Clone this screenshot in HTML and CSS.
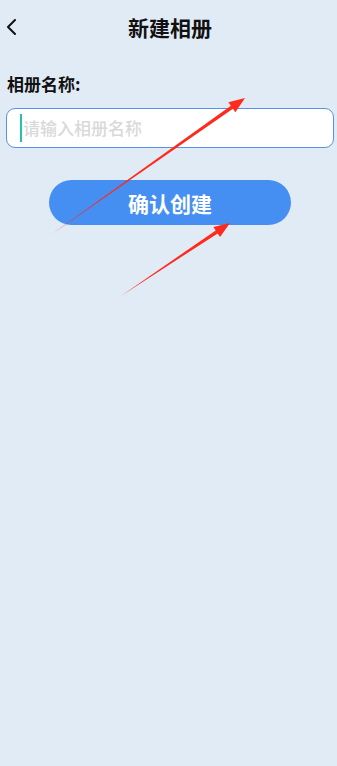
FILE: index.html
```html
<!DOCTYPE html>
<html lang="zh-CN">
<head>
<meta charset="utf-8">
<title>新建相册</title>
<link rel="stylesheet" href="styles.css">
</head>
<body>
<div class="page">
  <header class="topbar">
    <span class="back">
      <svg width="12" height="16" viewBox="0 0 12 16"><path d="M10 1 L3 8 L10 15" fill="none" stroke="#111" stroke-width="2" stroke-linecap="round" stroke-linejoin="round"/></svg>
    </span>
    <h1 class="title">新建相册</h1>
    <span class="spacer"></span>
  </header>
  <main class="form">
    <div class="label">相册名称:</div>
    <div class="field">
      <span class="caret"></span>
      <span class="placeholder">请输入相册名称</span>
    </div>
    <button class="submit">确认创建</button>
  </main>
  <svg class="annot" width="337" height="766" viewBox="0 0 337 766">
    <polygon fill="#ff2a1c" points="52,234 232.95,108.69 235.37,112.13 245,98 228.45,102.31 230.87,105.75"/>
    <polygon fill="#ff2a1c" points="121,296 217.70,233.40 220.04,236.89 230,223 213.36,226.91 215.70,230.40"/>
  </svg>
</div>
</body>
</html>
```
FILE: styles.css
```css
html, body {
  margin: 0;
  padding: 0;
  background: #e1ebf5;
}
body {
  font-family: "Noto Sans CJK SC", "Noto Sans", sans-serif;
  color: #111;
}
.page {
  position: relative;
  width: 337px;
  min-height: 766px;
}
.topbar {
  height: 54px;
  display: grid;
  grid-template-columns: 40px 1fr 40px;
  align-items: center;
}
.back {
  display: flex;
  padding-left: 5px;
}
.title {
  margin: 0;
  text-align: center;
  font-size: 21px;
  font-weight: 700;
  line-height: 28px;
  padding-left: 3px;
}
.form {
  display: flex;
  flex-direction: column;
}
.label {
  margin: 18px 0 0 7px;
  font-size: 17px;
  font-weight: 700;
  line-height: 24px;
}
.field {
  margin: 12px 3px 0 6px;
  height: 40px;
  box-sizing: border-box;
  border: 1.5px solid #5a91e6;
  border-radius: 9px;
  background: #fff;
  display: flex;
  align-items: center;
  padding-left: 13px;
}
.caret {
  width: 2px;
  height: 28px;
  background: #1ec6a6;
  margin-right: 1px;
}
.placeholder {
  font-size: 17px;
  color: #d9d9d9;
  font-weight: 500;
  line-height: 24px;
}
.submit {
  margin: 32px 0 0 49px;
  width: 242px;
  height: 45px;
  border: none;
  border-radius: 23px;
  background: #458ef2;
  color: #fff;
  font-family: inherit;
  font-size: 21px;
  font-weight: 700;
  padding: 0;
}
.annot {
  position: absolute;
  left: 0;
  top: 0;
  pointer-events: none;
}
```
